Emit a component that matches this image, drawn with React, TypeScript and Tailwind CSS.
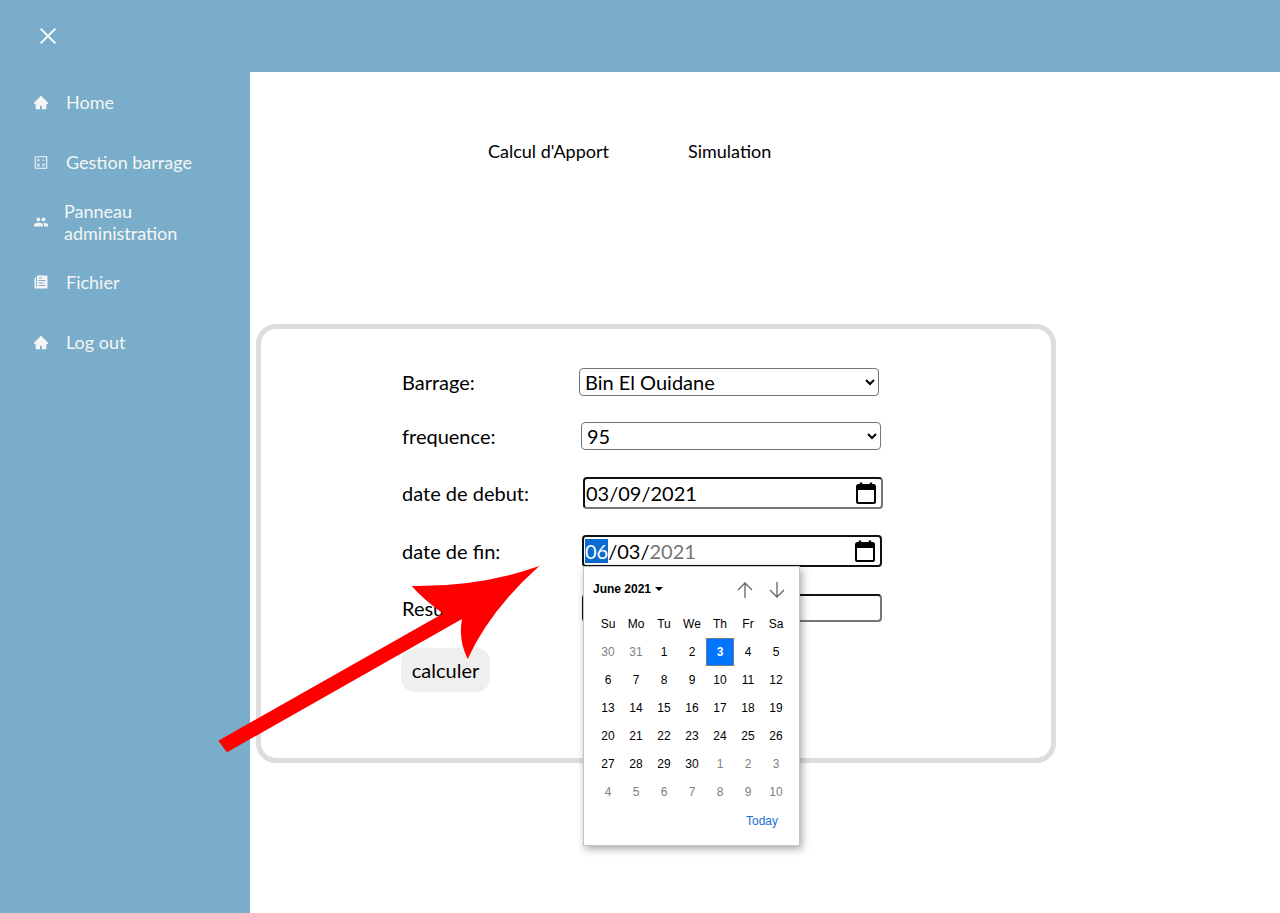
import { AiFillHome, AiOutlineCalculator, AiOutlineClose } from "react-icons/ai";
import { IoMdPeople, IoIosPaper } from "react-icons/io";

const lato = "font-['Lato','Noto_Sans',sans-serif]";

function NavItem({ icon, label, gap = "gap-[17px]" }: { icon: React.ReactNode; label: string; gap?: string }) {
  return (
    <div className={`flex h-[60px] items-center pl-[33px] text-[18px] leading-[22px] text-[#f5f5f5] ${gap}`}>
      <span className="flex w-4 items-center justify-center">{icon}</span>
      <span className="w-[150px]">{label}</span>
    </div>
  );
}

function CalIcon() {
  return (
    <svg width="20" height="22" viewBox="0 0 20 22" className="shrink-0">
      <path d="M5 0.5v3M15 0.5v3" stroke="#000" strokeWidth="2.4" />
      <rect x="1" y="3" width="18" height="18" rx="1.5" fill="none" stroke="#000" strokeWidth="2" />
      <rect x="1" y="3" width="18" height="5" fill="#000" />
    </svg>
  );
}

const days = [
  [30, 31, 1, 2, 3, 4, 5],
  [6, 7, 8, 9, 10, 11, 12],
  [13, 14, 15, 16, 17, 18, 19],
  [20, 21, 22, 23, 24, 25, 26],
  [27, 28, 29, 30, 1, 2, 3],
  [4, 5, 6, 7, 8, 9, 10],
];

function Picker() {
  return (
    <div className="absolute left-px top-[31px] z-10 h-[280px] w-[217px] border border-[#c4c4c4] bg-white font-['Liberation_Sans',Arial,sans-serif] text-[12px] text-black shadow-[2px_3px_8px_rgba(0,0,0,0.35)]">
      <div className="flex h-[43px] items-center pl-[9px] pr-[14px]">
        <span className="font-bold">June 2021</span>
        <svg width="8" height="4" viewBox="0 0 8 4" className="ml-[4px]"><path d="M0 0h8L4 4z" fill="#000" /></svg>
        <div className="ml-auto mt-[2px] flex gap-[16px]">
          <svg width="16" height="16" viewBox="0 0 16 16" fill="none" stroke="#666" strokeWidth="1.3"><path d="M8 16V1M1 8l7-7 7 7" /></svg>
          <svg width="16" height="16" viewBox="0 0 16 16" fill="none" stroke="#666" strokeWidth="1.3"><path d="M8 0v15M1 8l7 7 7-7" /></svg>
        </div>
      </div>
      <div className="mx-[10px] grid grid-cols-[repeat(7,28px)] auto-rows-[28px] text-center leading-[28px]">
        {["Su", "Mo", "Tu", "We", "Th", "Fr", "Sa"].map((d) => (
          <div key={d}>{d}</div>
        ))}
        {days.flatMap((row, r) =>
          row.map((d, c) => {
            const muted = (r === 0 && c < 2) || (r === 4 && c > 3) || r === 5;
            const selected = r === 0 && c === 4;
            return (
              <div
                key={`${r}-${c}`}
                className={
                  selected
                    ? "border border-[#6f7d8f] bg-[#0075ff] font-bold leading-[26px] text-white"
                    : muted
                      ? "text-[#808080]"
                      : "text-black"
                }
              >
                {d}
              </div>
            );
          })
        )}
      </div>
      <div className="mt-[8px] pr-[21px] text-right leading-[14px] text-[#1a6fd4]">Today</div>
    </div>
  );
}

function Arrow() {
  return (
    <svg className="pointer-events-none absolute left-0 top-0 z-20" width="1280" height="913" viewBox="0 0 1280 913">
      <path
        d="M218.3 740.7 L443 613.5 Q424 600 411.7 586 Q480 587 539.3 566 Q490 610 467.7 659 Q458 640 462 619 L227 752.3 Z"
        fill="#ff0000"
      />
    </svg>
  );
}

const dateBox = "flex h-8 w-[300px] items-center justify-between rounded-[4px] border-2 border-t-[#111] border-l-[#111] bg-white";

export default function App() {
  return (
    <div className={`relative h-[913px] w-[1280px] overflow-hidden bg-white text-black ${lato}`}>
      <header className="flex h-[72px] items-center bg-[#79adc9] pl-[36px] text-white">
        <AiOutlineClose size={24} />
      </header>
      <div className="flex h-[841px]">
        <aside className="w-[250px] shrink-0 bg-[#79adc9]">
          <NavItem icon={<AiFillHome size={17} />} label="Home" />
          <NavItem icon={<AiOutlineCalculator size={17} />} label="Gestion barrage" />
          <NavItem icon={<IoMdPeople size={16} />} label="Panneau administration" gap="gap-[15px]" />
          <NavItem icon={<IoIosPaper size={18} />} label="Fichier" />
          <NavItem icon={<AiFillHome size={17} />} label="Log out" />
        </aside>
        <main className="min-w-0 flex-1">
          <nav className="flex h-[84px] items-end pb-[-8px] pl-[238px] text-[18px] leading-[22px]">
            <span className="mb-[-6px]">Calcul d'Apport</span>
            <span className="mb-[-6px] ml-[79px]">Simulation</span>
          </nav>
          <section className="ml-[6px] mt-[168px] h-[439px] w-[800px] rounded-[20px] border-[5px] border-[#dddddd] pl-[141px] pt-[39px] text-[20px] leading-[24px]">
            <div className="flex h-7 items-center">
              <label className="w-[177px]">Barrage:</label>
              <select className="h-7 w-[300px] rounded-[4px] border border-[#767676] bg-white pl-[1px] text-[20px]" defaultValue="Bin El Ouidane">
                <option>Bin El Ouidane</option>
              </select>
            </div>
            <div className="mt-[26px] flex h-7 items-center">
              <label className="w-[179px]">frequence:</label>
              <select className="h-7 w-[300px] rounded-[4px] border border-[#767676] bg-white pl-[1px] text-[20px]" defaultValue="95">
                <option>95</option>
              </select>
            </div>
            <div className="mt-[27px] flex h-8 items-center">
              <label className="w-[181px]">date de debut:</label>
              <div className={`${dateBox} border-r-[#767676] border-b-[#767676] pl-px pr-[5px]`}>
                <span>03/09/2021</span>
                <CalIcon />
              </div>
            </div>
            <div className="mt-[26px] flex h-8 items-center">
              <label className="w-[180px]">date de fin:</label>
              <div className="relative">
                <div className={`${dateBox} border-r-[#111] border-b-[#111] pl-px pr-[5px]`}>
                  <span>
                    <span className="bg-[#0a6ccf] text-white">06</span>/03/<span className="text-[#757575]">2021</span>
                  </span>
                  <CalIcon />
                </div>
                <Picker />
              </div>
            </div>
            <div className="mt-[27px] flex h-7 items-center">
              <label className="w-[180px]">Resultat:</label>
              <div className="h-7 w-[300px] rounded-[4px] border-2 border-t-[#111] border-l-[#111] border-r-[#767676] border-b-[#767676]" />
            </div>
            <button className="ml-[-1px] mt-[26px] block h-11 w-[89px] rounded-[14px] bg-[#efefef] text-center text-[20px]">
              calculer
            </button>
          </section>
        </main>
      </div>
      <Arrow />
    </div>
  );
}
